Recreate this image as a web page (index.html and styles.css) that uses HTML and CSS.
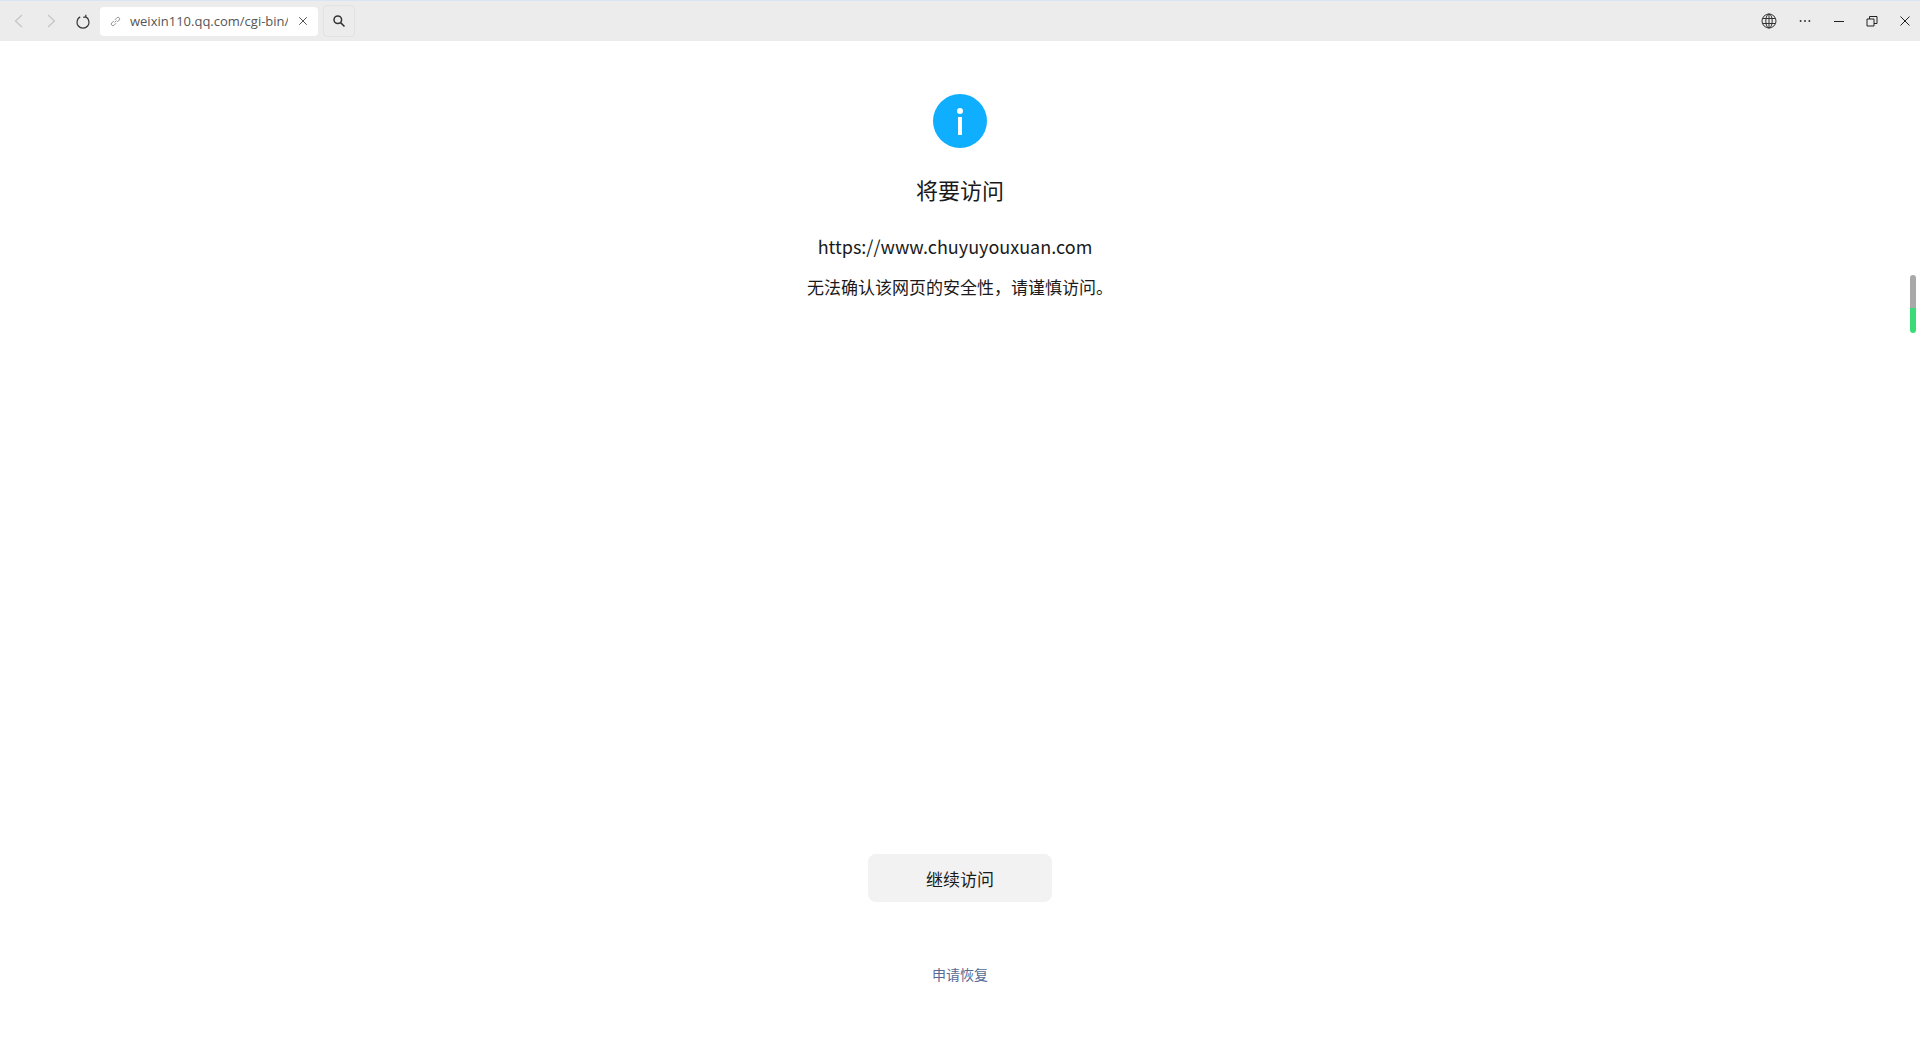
FILE: index.html
```html
<!DOCTYPE html>
<html lang="zh-CN">
<head>
<meta charset="utf-8">
<title>将要访问</title>
<link rel="stylesheet" href="styles.css">
</head>
<body>
<header class="toolbar">
  <div class="nav">
    <svg class="nav-icon" viewBox="0 0 16 16"><path class="faint" d="M11 2 4.5 8l6.500 6"/></svg>
    <svg class="nav-icon" viewBox="0 0 16 16"><path class="faint" d="M5 2l6.500 6L5 14"/></svg>
    <svg class="nav-icon" viewBox="0 0 16 16"><path d="M5.200 2.900A6 6 0 1 0 10.800 2.900M10.800 2.900 10.800 0.700M10.800 2.900 8.300 3.400" transform="translate(0 1)"/></svg>
  </div>
  <div class="address">
    <svg class="link-icon" viewBox="0 0 14 14"><path d="M6 8l2-2M5.200 6.300 2.800 8.700a1.800 1.800 0 0 0 2.500 2.500l2.400-2.400M6.300 5.200l2.400-2.400a1.800 1.800 0 0 1 2.500 2.500L8.800 7.700"/></svg>
    <span class="url">weixin110.qq.com/cgi-bin/mmspamsupport</span>
    <svg class="close-icon" viewBox="0 0 12 12"><path d="M1.500 1.500l9 9M10.500 1.500l-9 9"/></svg>
  </div>
  <button class="search"><svg viewBox="0 0 14 14"><circle cx="5.800" cy="5.800" r="3.800"/><path d="M8.600 8.600 12.500 12.500"/></svg></button>
  <div class="window-controls">
    <svg class="globe" viewBox="0 0 16 16"><circle cx="8" cy="8" r="7"/><ellipse cx="8" cy="8" rx="3.200" ry="7"/><path d="M8 1v14M1.600 5.500h12.800M1.600 10.500h12.800"/></svg>
    <svg class="ctl more" viewBox="0 0 16 16"><circle cx="3" cy="8" r="1.100"/><circle cx="8" cy="8" r="1.100"/><circle cx="13" cy="8" r="1.100"/></svg>
    <svg class="ctl" viewBox="0 0 12 12"><path d="M1 6.500h10"/></svg>
    <svg class="ctl" viewBox="0 0 12 12"><path d="M1 4h7v7H1zM3.500 4V1.500h7.500v7H8"/></svg>
    <svg class="ctl" viewBox="0 0 12 12"><path d="M1.500 1.500l9 9M10.500 1.500l-9 9"/></svg>
  </div>
</header>
<main class="page">
  <div class="info-icon"><span class="info-dot"></span><span class="info-bar"></span></div>
  <h1 class="title">将要访问</h1>
  <p class="target">https://www.chuyuyouxuan.com</p>
  <p class="warning">无法确认该网页的安全性，请谨慎访问。</p>
  <button class="continue">继续访问</button>
  <a class="appeal" href="#">申请恢复</a>
</main>
<div class="scroll-mark"><span class="scroll-grey"></span><span class="scroll-green"></span></div>
</body>
</html>
```

FILE: styles.css
```css
* { box-sizing: border-box; }
html, body { margin: 0; height: 100%; }
body {
  display: flex;
  flex-direction: column;
  height: 1040px;
  overflow: hidden;
  background: #fff;
  font-family: "Noto Sans CJK SC", "Liberation Sans", sans-serif;
  color: #1a1a1a;
}
svg { display: block; fill: none; stroke: #333; stroke-width: 1.2; }

.toolbar {
  display: flex;
  align-items: center;
  flex: none;
  height: 41px;
  padding: 0 0 0 11px;
  background: #ececec;
  border-top: 1px solid #d9e4f5;
}
.nav { display: flex; align-items: center; gap: 16px; width: 89px; }
.nav-icon { width: 16px; height: 16px; }
.nav-icon .faint { stroke: #c4c4c4; }
.address {
  display: flex;
  align-items: center;
  width: 218px;
  height: 29px;
  margin-top: 0;
  padding: 0 10px 0 9px;
  background: #fff;
  border-radius: 4px;
}
.link-icon { flex: none; width: 13px; height: 13px; }
.link-icon path { stroke: #888; stroke-width: 1; }
.url {
  flex: 1;
  min-width: 0;
  margin: 0 10px 0 8px;
  overflow: hidden;
  white-space: nowrap;
  font-family: "Open Sans", "Liberation Sans", sans-serif;
  font-size: 13px;
  color: #555;
}
.close-icon { flex: none; width: 10px; height: 10px; }
.close-icon path { stroke: #555; }
.search {
  display: flex;
  align-items: center;
  justify-content: center;
  width: 32px;
  height: 32px;
  margin-left: 5px;
  padding: 0;
  background: #ececec;
  border: 1px solid #e2e2e2;
  border-radius: 4px;
}
.search svg { width: 14px; height: 14px; stroke: #333; stroke-width: 1.5; }
.window-controls {
  display: flex;
  align-items: center;
  gap: 21px;
  margin-left: auto;
  padding-right: 9px;
}
.globe { width: 16px; height: 16px; stroke-width: 1; }
.ctl { width: 12px; height: 12px; }
.ctl path { stroke: #222; stroke-width: 1; }
.more { width: 14px; height: 14px; stroke: none; fill: #333; }

.page {
  position: relative;
  display: flex;
  flex: 1;
  flex-direction: column;
  align-items: center;
  padding-top: 53px;
}
.info-icon {
  display: flex;
  flex-direction: column;
  align-items: center;
  width: 54px;
  height: 54px;
  padding-top: 14px;
  background: #10aeff;
  border-radius: 50%;
}
.info-dot { width: 6px; height: 6px; background: #fff; border-radius: 50%; }
.info-bar { width: 4px; height: 18px; margin-top: 3px; background: #fff; }
.title {
  margin: 22px 0 0;
  font-size: 22px;
  font-weight: 400;
  line-height: 38px;
}
.target {
  margin: 25px 10px 0 0;
  font-size: 18px;
  line-height: 26px;
}
.warning {
  margin: 15px 0 0;
  font-size: 17px;
  line-height: 26px;
}
.continue {
  width: 184px;
  height: 48px;
  margin-top: 554px;
  background: #f2f2f2;
  border: 0;
  border-radius: 8px;
  font: inherit;
  font-size: 17px;
  color: #1a1a1a;
}
.appeal {
  margin-top: 61px;
  font-size: 14px;
  line-height: 22px;
  color: #576b95;
  text-decoration: none;
}
.scroll-mark {
  position: absolute;
  top: 275px;
  left: 1910px;
  display: flex;
  flex-direction: column;
  width: 6px;
  height: 58px;
  overflow: hidden;
  border-radius: 3px;
}
.scroll-grey { height: 33px; background: #a9a9a9; }
.scroll-green { flex: 1; background: #3bdc78; }
```
